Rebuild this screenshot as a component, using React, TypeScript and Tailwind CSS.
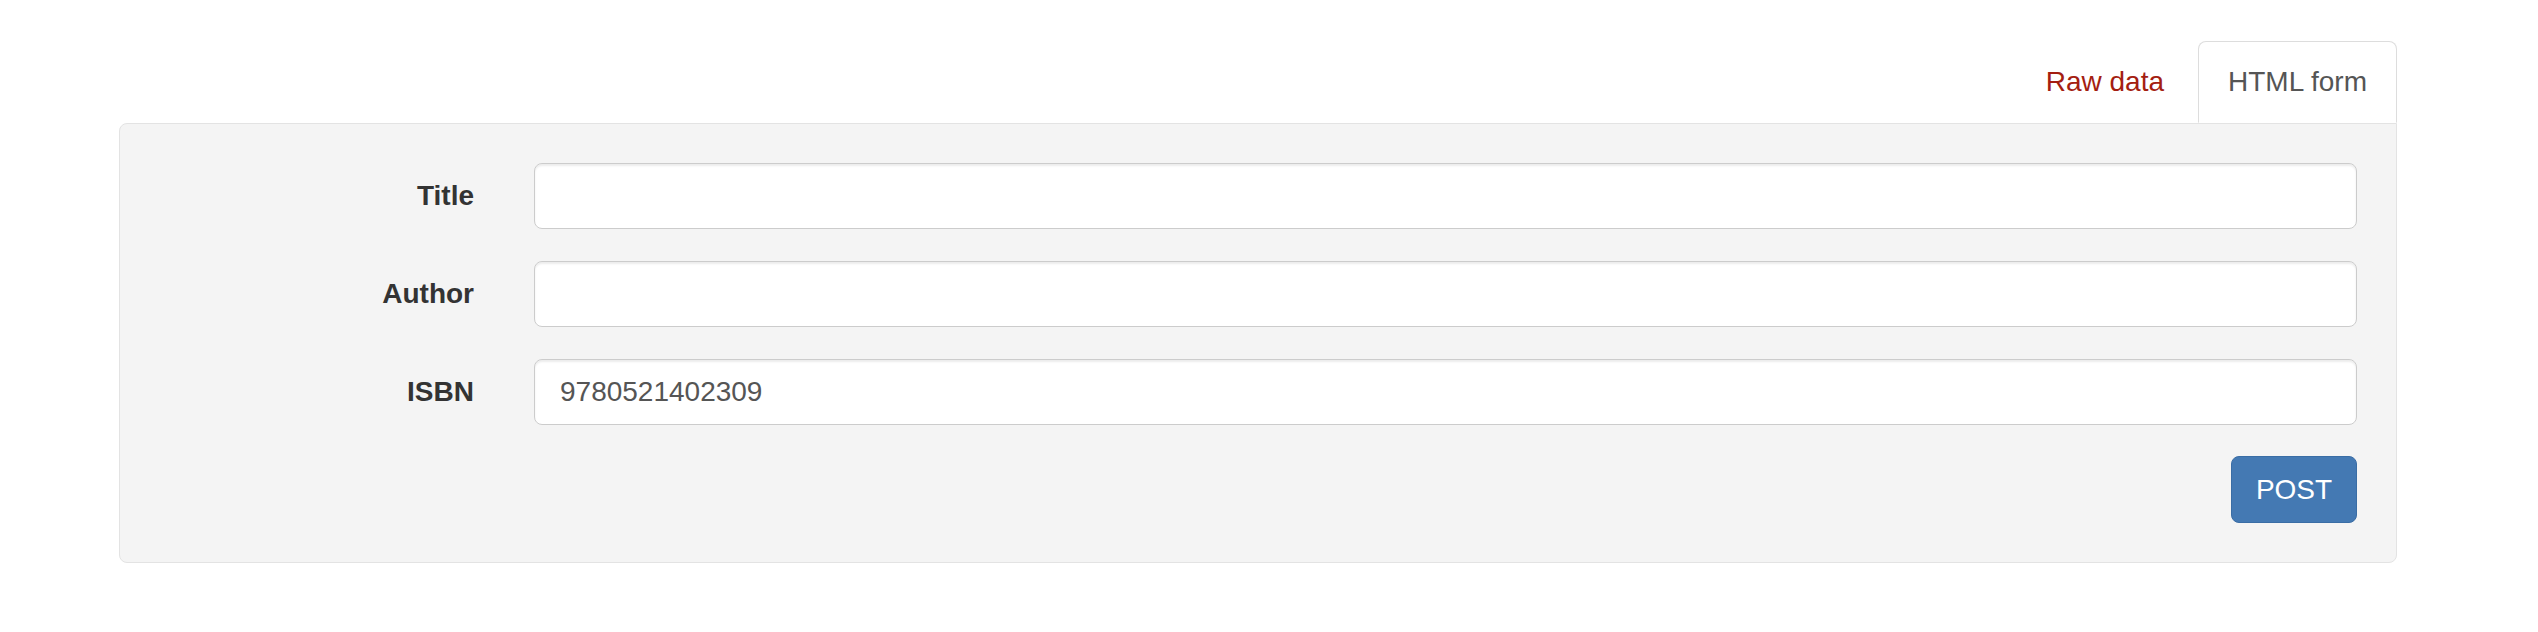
import React from "react";

const fields = [
  { label: "Title", value: "" },
  { label: "Author", value: "" },
  { label: "ISBN", value: "9780521402309" },
];

const App = () => {
  return (
    <div
      className="min-h-screen bg-white pt-[41px] pl-[119px] pr-[141px] text-[28px] text-[#333]"
      style={{ fontFamily: '"Liberation Sans", Arial, Helvetica, sans-serif' }}
    >
      {/* tabs */}
      <ul className="flex justify-end">
        <li className="mr-[4px]">
          <a className="block border border-transparent px-[29px] pt-[20px] pb-[20px] leading-[40px] text-[#a41e11]">
            Raw data
          </a>
        </li>
        <li className="relative z-10 -mb-px">
          <a className="block rounded-t-[8px] border border-[#ddd] border-b-transparent bg-white px-[29px] pt-[20px] pb-[20px] leading-[40px] text-[#555]">
            HTML form
          </a>
        </li>
      </ul>

      {/* form panel */}
      <div className="rounded-[8px] rounded-tr-none border border-[#e3e3e3] bg-[#f4f4f4] pt-[39px] pr-[39px] pb-[39px]">
        <form className="flex flex-col gap-[32px]">
          {fields.map((f) => (
            <div key={f.label} className="flex items-center">
              <label className="w-[354px] shrink-0 text-right font-bold leading-[40px] text-[#333]">
                {f.label}
              </label>
              <input
                type="text"
                defaultValue={f.value}
                className="ml-[60px] h-[66px] flex-1 rounded-[8px] border border-[#ccc] bg-white px-[25px] text-[28px] text-[#555] shadow-[inset_0_2px_2px_rgba(0,0,0,0.075)] outline-none"
              />
            </div>
          ))}
        </form>
        <div className="mt-[31px] flex justify-end">
          <button
            type="button"
            className="h-[67px] w-[126px] rounded-[8px] border border-[#3a6da5] bg-[#4479b3] text-[28px] text-white"
          >
            POST
          </button>
        </div>
      </div>
    </div>
  );
};

export default App;
